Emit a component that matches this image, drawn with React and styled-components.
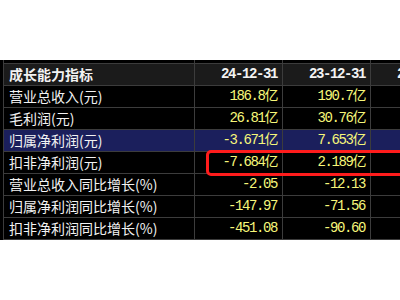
import React from 'react'
import styled, { createGlobalStyle } from 'styled-components'

const Global = createGlobalStyle`
  html, body {
    margin: 0;
    padding: 0;
    background: #ffffff;
    overflow: hidden;
  }
`

const Page = styled.div`
  box-sizing: border-box;
  padding-top: 60px;
  width: 400px;
  height: 300px;
  overflow: hidden;
`

const Board = styled.div`
  position: relative;
  background: #000;
  padding-left: 3px;
  width: 460px;
`

const Grid = styled.div`
  display: grid;
  grid-template-columns: 190px 87px 87px 87px;
  grid-template-rows: 3px repeat(8, 21px);
  gap: 1px;
  padding: 0 1px 1px 1px;
  background: #3c3c3c;
  width: max-content;
`

const Cell = styled.div`
  background: ${p => (p.$head ? '#1b1b1b' : p.$hl ? '#1b1f5c' : '#000')};
  color: ${p => (p.$num && !p.$head ? '#f6f67a' : '#f2f2f2')};
  font-family: ${p =>
    p.$num
      ? '"Liberation Mono", "Noto Sans CJK SC", monospace'
      : '"Noto Sans CJK SC", "Liberation Sans", sans-serif'};
  font-size: 14px;
  font-weight: ${p => (p.$head ? 700 : 400)};
  letter-spacing: ${p => (p.$num ? '-1.4px' : '0')};
  line-height: 21px;
  text-align: ${p => (p.$num ? 'right' : 'left')};
  padding: ${p => (p.$num ? '0 5px 0 0' : '0 0 0 5px')};
  white-space: nowrap;
  overflow: hidden;
`

const Spacer = styled.div`
  background: #000;
`

const Mark = styled.div`
  position: absolute;
  left: 206px;
  top: 90px;
  width: 240px;
  height: 20px;
  border: 3px solid #ff1c1c;
  border-radius: 5px;
  pointer-events: none;
`

const dates = ['24-12-31', '23-12-31', '22-12-31']

const rows = [
  { name: '营业总收入(元)', vals: ['186.8亿', '190.7亿', '217亿'] },
  { name: '毛利润(元)', vals: ['26.81亿', '30.76亿', '35亿'] },
  { name: '归属净利润(元)', vals: ['-3.671亿', '7.653亿', '27亿'], hl: true },
  { name: '扣非净利润(元)', vals: ['-7.684亿', '2.189亿', '23亿'] },
  { name: '营业总收入同比增长(%)', vals: ['-2.05', '-12.13', '5.4'] },
  { name: '归属净利润同比增长(%)', vals: ['-147.97', '-71.56', '1.2'] },
  { name: '扣非净利润同比增长(%)', vals: ['-451.08', '-90.60', '8.8'] },
]

export default function App() {
  return (
    <Page>
      <Global />
      <Board>
        <Grid>
          <Spacer />
          <Spacer />
          <Spacer />
          <Spacer />
          <Cell $head>成长能力指标</Cell>
          {dates.map(d => (
            <Cell $head $num key={d}>
              {d}
            </Cell>
          ))}
          {rows.map(r => (
            <React.Fragment key={r.name}>
              <Cell $hl={r.hl}>{r.name}</Cell>
              {r.vals.map((v, i) => (
                <Cell $num $hl={r.hl} key={i}>
                  {v}
                </Cell>
              ))}
            </React.Fragment>
          ))}
        </Grid>
        <Mark />
      </Board>
    </Page>
  )
}
